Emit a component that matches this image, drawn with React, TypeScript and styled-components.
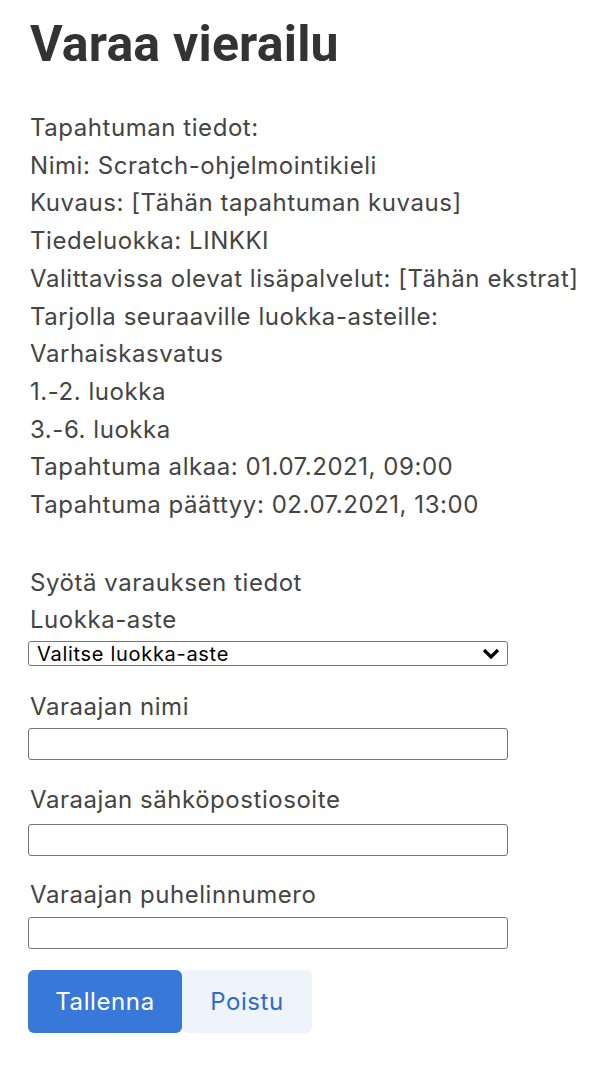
import React from "react";
import styled, { createGlobalStyle } from "styled-components";

const Global = createGlobalStyle`
  html, body { margin: 0; padding: 0; background: #fff; }
  body { font-family: Inter, "Noto Sans", sans-serif; color: #444; }
`;

const Page = styled.div`
  padding: 14px 10px 30px 30px;
`;

const Title = styled.h1`
  margin: 0;
  font-family: Roboto, Inter, sans-serif;
  font-weight: 700;
  font-size: 50px;
  line-height: 60px;
  color: #333;
  letter-spacing: 0.2px;
`;

const Info = styled.div`
  margin-top: 35px;
  font-size: 24px;
  letter-spacing: 0.55px;
  line-height: 37.7px;
  white-space: nowrap;
`;

const Line = styled.div``;

const Form = styled.form`
  margin-top: 40px;
  display: flex;
  flex-direction: column;
`;

const Heading = styled.div`
  font-size: 24px;
  letter-spacing: 0.55px;
  line-height: 37.7px;
`;

const Label = styled.label<{ $top?: number }>`
  display: block;
  font-size: 24px;
  letter-spacing: 0.55px;
  line-height: 37.7px;
  margin-top: ${(p) => p.$top ?? 0}px;
`;

const Select = styled.select`
  box-sizing: border-box;
  margin: 2px 0 0 -2px;
  width: 480px;
  height: 25px;
  border: 1px solid #767676;
  border-radius: 3px;
  background: #fff;
  font-family: Inter, sans-serif;
  font-size: 20px;
  letter-spacing: 0.7px;
  color: #000;
  padding: 0 8px;
  appearance: none;
  background-image: url("data:image/svg+xml;utf8,<svg xmlns='http://www.w3.org/2000/svg' width='20' height='14' viewBox='0 0 20 14'><path d='M3 3l7 7 7-7' fill='none' stroke='black' stroke-width='3.2'/></svg>");
  background-repeat: no-repeat;
  background-position: right 6px center;
`;

const Input = styled.input<{ $top: number }>`
  box-sizing: border-box;
  margin: ${(p) => p.$top}px 0 0 -2px;
  width: 480px;
  height: 32px;
  border: 1px solid #767676;
  border-radius: 3px;
  background: #fff;
  font-size: 19px;
`;

const Buttons = styled.div`
  display: flex;
  margin-top: 21px;
  margin-left: -2px;
`;

const Button = styled.button<{ $primary?: boolean }>`
  height: 63px;
  padding: 0;
  border: none;
  border-radius: 6px;
  font-family: Inter, sans-serif;
  font-size: 24px;
  letter-spacing: 0.6px;
  background: ${(p) => (p.$primary ? "#3778d8" : "#eef3fc")};
  color: ${(p) => (p.$primary ? "#fff" : "#2d6bcb")};
  width: ${(p) => (p.$primary ? 154 : 130)}px;
  cursor: pointer;
`;

const info = [
  "Tapahtuman tiedot:",
  "Nimi: Scratch-ohjelmointikieli",
  "Kuvaus: [Tähän tapahtuman kuvaus]",
  "Tiedeluokka: LINKKI",
  "Valittavissa olevat lisäpalvelut: [Tähän ekstrat]",
  "Tarjolla seuraaville luokka-asteille:",
  "Varhaiskasvatus",
  "1.-2. luokka",
  "3.-6. luokka",
  "Tapahtuma alkaa: 01.07.2021, 09:00",
  "Tapahtuma päättyy: 02.07.2021, 13:00",
];

export default function App() {
  return (
    <>
      <Global />
      <Page>
        <Title>Varaa vierailu</Title>
        <Info>
          {info.map((t) => (
            <Line key={t}>{t}</Line>
          ))}
        </Info>
        <Form onSubmit={(e) => e.preventDefault()}>
          <Heading>Syötä varauksen tiedot</Heading>
          <Label>Luokka-aste</Label>
          <Select defaultValue="">
            <option value="">Valitse luokka-aste</option>
            <option>Varhaiskasvatus</option>
            <option>1.-2. luokka</option>
            <option>3.-6. luokka</option>
          </Select>
          <Label $top={22}>Varaajan nimi</Label>
          <Input type="text" $top={2} />
          <Label $top={21}>Varaajan sähköpostiosoite</Label>
          <Input type="email" $top={5} />
          <Label $top={20}>Varaajan puhelinnumero</Label>
          <Input type="tel" $top={4} />
          <Buttons>
            <Button type="submit" $primary>Tallenna</Button>
            <Button type="button">Poistu</Button>
          </Buttons>
        </Form>
      </Page>
    </>
  );
}
